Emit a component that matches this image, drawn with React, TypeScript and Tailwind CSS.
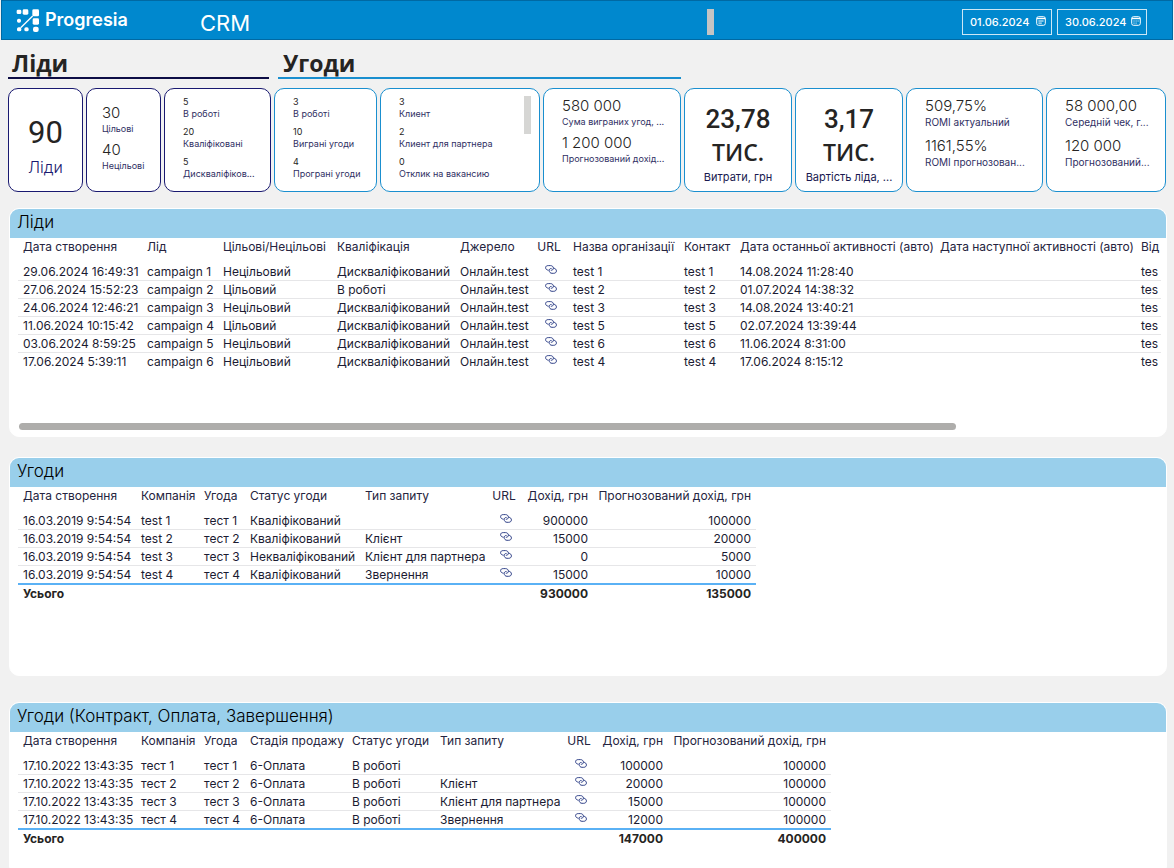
import { ReactNode } from "react";

type Metric = { value: string; label: string };

type Column = {
  title: string;
  width: number;
  align?: "left" | "right" | "center";
};

type DataTableProps = {
  label: string;
  columns: Column[];
  rows: string[][];
  total?: string[];
  fluid?: boolean;
};

// Cells holding this marker are drawn as a link icon
const LINK = "@link";

const leadColumns: Column[] = [
  { title: "Дата створення", width: 124 },
  { title: "Лід", width: 76 },
  { title: "Цільові/Нецільові", width: 114 },
  { title: "Кваліфікація", width: 123 },
  { title: "Джерело", width: 80 },
  { title: "URL", width: 33, align: "center" },
  { title: "Назва організації", width: 111 },
  { title: "Контакт", width: 56 },
  { title: "Дата останньої активності (авто)", width: 200 },
  { title: "Дата наступної активності (авто)", width: 201 },
  { title: "Від", width: 26 }
];

const leadRows = [
  ["29.06.2024 16:49:31", "campaign 1", "Нецільовий", "Дискваліфікований", "Онлайн.test", LINK, "test 1", "test 1", "14.08.2024 11:28:40", "", "tes"],
  ["27.06.2024 15:52:23", "campaign 2", "Цільовий", "В роботі", "Онлайн.test", LINK, "test 2", "test 2", "01.07.2024 14:38:32", "", "tes"],
  ["24.06.2024 12:46:21", "campaign 3", "Нецільовий", "Дискваліфікований", "Онлайн.test", LINK, "test 3", "test 3", "14.08.2024 13:40:21", "", "tes"],
  ["11.06.2024 10:15:42", "campaign 4", "Цільовий", "Дискваліфікований", "Онлайн.test", LINK, "test 5", "test 5", "02.07.2024 13:39:44", "", "tes"],
  ["03.06.2024 8:59:25", "campaign 5", "Нецільовий", "Дискваліфікований", "Онлайн.test", LINK, "test 6", "test 6", "11.06.2024 8:31:00", "", "tes"],
  ["17.06.2024 5:39:11", "campaign 6", "Нецільовий", "Дискваліфікований", "Онлайн.test", LINK, "test 4", "test 4", "17.06.2024 8:15:12", "", "tes"]
];

const dealColumns: Column[] = [
  { title: "Дата створення", width: 118 },
  { title: "Компанія", width: 63 },
  { title: "Угода", width: 46 },
  { title: "Статус угоди", width: 115 },
  { title: "Тип запиту", width: 130 },
  { title: "URL", width: 33, align: "center" },
  { title: "Дохід, грн", width: 70, align: "right" },
  { title: "Прогнозований дохід, грн", width: 163, align: "right" }
];

const dealRows = [
  ["16.03.2019 9:54:54", "test 1", "тест 1", "Кваліфікований", "", LINK, "900000", "100000"],
  ["16.03.2019 9:54:54", "test 2", "тест 2", "Кваліфікований", "Клієнт", LINK, "15000", "20000"],
  ["16.03.2019 9:54:54", "test 3", "тест 3", "Некваліфікований", "Клієнт для партнера", LINK, "0", "5000"],
  ["16.03.2019 9:54:54", "test 4", "тест 4", "Кваліфікований", "Звернення", LINK, "15000", "10000"]
];

const stageColumns: Column[] = [
  { title: "Дата створення", width: 118 },
  { title: "Компанія", width: 63 },
  { title: "Угода", width: 46 },
  { title: "Стадія продажу", width: 102 },
  { title: "Статус угоди", width: 88 },
  { title: "Тип запиту", width: 130 },
  { title: "URL", width: 33, align: "center" },
  { title: "Дохід, грн", width: 70, align: "right" },
  { title: "Прогнозований дохід, грн", width: 163, align: "right" }
];

const stageRows = [
  ["17.10.2022 13:43:35", "тест 1", "тест 1", "6-Оплата", "В роботі", "", LINK, "100000", "100000"],
  ["17.10.2022 13:43:35", "тест 2", "тест 2", "6-Оплата", "В роботі", "Клієнт", LINK, "20000", "100000"],
  ["17.10.2022 13:43:35", "тест 3", "тест 3", "6-Оплата", "В роботі", "Клієнт для партнера", LINK, "15000", "100000"],
  ["17.10.2022 13:43:35", "тест 4", "тест 4", "6-Оплата", "В роботі", "Звернення", LINK, "12000", "100000"]
];

const alignClass = {
  left: "pl-[5px] text-left",
  right: "pr-[5px] text-right",
  center: "pr-[5px] text-center"
};

function Logo() {
  return (
    <svg viewBox="0 0 69 69" className="h-[23px] w-[23px]" fill="#fff" aria-hidden="true">
      <rect x="2" y="2" width="14" height="13" rx="4" />
      <rect x="20" y="1" width="17" height="16" rx="4" />
      <rect x="49" y="1" width="20" height="21" rx="4" />
      <rect x="3" y="29" width="12" height="12" rx="5" />
      <rect x="50" y="28" width="19" height="19" rx="4" />
      <rect x="3" y="55" width="13" height="12" rx="5" />
      <rect x="25" y="55" width="13" height="12" rx="5" />
      <rect x="51" y="53" width="17" height="16" rx="6" />
      <path d="M14 56 50 21" stroke="#fff" strokeWidth="4" />
    </svg>
  );
}

function LinkIcon() {
  return (
    <svg
      viewBox="0 0 12 9"
      className="h-[9px] w-[12px]"
      fill="none"
      stroke="#1c2f7d"
      strokeWidth="0.9"
      strokeLinecap="round"
      aria-hidden="true"
    >
      <path d="M3.2 5.2C1.600 5 .6 4 .6 2.700.6 1.200 1.700.6 3.300.6h2.200c1.600 0 2.900 1 2.900 2.600 0 1.300-1 2.200-2.200 2.100" />
      <path d="M9 3.200c1.500.3 2.400 1.400 2.400 2.700 0 1.500-1.100 2.400-2.700 2.400H7c-1.600 0-2.800-1.200-2.800-2.700 0-1.300.8-2.300 2-2.200" />
    </svg>
  );
}

function CalendarIcon({ dots }: { dots?: boolean }) {
  return (
    <svg viewBox="0 0 10 10" className="mt-[6px] h-[10px] w-[10px] shrink-0" fill="none" stroke="#fff" strokeWidth="1" aria-hidden="true">
      <rect x="0.700" y="0.700" width="8.600" height="8.600" rx="1.800" />
      <path d="M0.700 2.500h8.600" strokeWidth="1.400" />
      {dots ? (
        <path d="M2.500 5h1M4.600 5h1M6.600 5h1M2.500 7.100h1M4.600 7.100h1" />
      ) : (
        <path d="M2.400 5h5.200M2.400 7.100h3.400" />
      )}
    </svg>
  );
}

function DateField({ label, value, dots }: { label: string; value: string; dots?: boolean }) {
  return (
    <label className="flex h-[26px] items-start gap-[4px] border border-white/80 px-[5px]">
      <input
        type="text"
        aria-label={label}
        defaultValue={value}
        className="h-[24px] w-[64px] bg-transparent pl-[2px] text-[11px] font-medium text-white outline-none"
      />
      <CalendarIcon dots={dots} />
    </label>
  );
}

function Card({ dark, className = "", children }: { dark?: boolean; className?: string; children: ReactNode }) {
  return (
    <div
      className={`flex min-w-0 flex-col rounded-[10px] border bg-white ${dark ? "border-[#191970]" : "border-[#1a8fcf]"} ${className}`}
    >
      {children}
    </div>
  );
}

function SmallMetrics({ items }: { items: Metric[] }) {
  return (
    <dl className="flex min-w-0 flex-1 flex-col gap-[6px] pt-[7px]">
      {items.map((item) => (
        <div key={item.label} className="flex flex-col-reverse">
          <dt className="text-[9px] leading-[12px] whitespace-nowrap text-[#2f2f63]">{item.label}</dt>
          <dd className="text-[9px] leading-[12px] text-[#252423]">{item.value}</dd>
        </div>
      ))}
    </dl>
  );
}

function MediumMetrics({ items, wide }: { items: Metric[]; wide?: boolean }) {
  return (
    <dl className={`flex flex-col ${wide ? "gap-[7px]" : "gap-[4px]"}`}>
      {items.map((item) => (
        <div key={item.label} className="flex flex-col-reverse">
          <dt className={`leading-[16px] whitespace-nowrap text-[#2f2f63] ${wide ? "text-[10px]" : "text-[9px]"}`}>{item.label}</dt>
          <dd className="text-[15px] leading-[17px] font-light text-[#252423]">{item.value}</dd>
        </div>
      ))}
    </dl>
  );
}

function BigMetric({ value, label }: Metric) {
  return (
    <>
      <p className="pt-[13px] text-center font-[Roboto] text-[26px] leading-[34px] font-medium text-[#252423]">{value}</p>
      <p className="text-center font-['Open_Sans'] text-[23px] leading-[32px] font-semibold text-[#252423]">ТИС.</p>
      <p className="text-center text-[11px] leading-[18px] whitespace-nowrap text-[#191950]">{label}</p>
    </>
  );
}

function DataTable({ label, columns, rows, total, fluid }: DataTableProps) {
  const width = columns.reduce((sum, column) => sum + column.width, 0);

  return (
    <table
      aria-label={label}
      className={`table-fixed border-separate border-spacing-0 text-[12px] leading-[17px] whitespace-nowrap text-[#1b1b32] ${fluid ? "min-w-full" : ""}`}
      style={{ width }}
    >
      <colgroup>
        {columns.map((column) => (
          <col key={column.title} style={{ width: column.width }} />
        ))}
      </colgroup>
      <thead>
        <tr>
          {columns.map((column) => (
            <th
              key={column.title}
              scope="col"
              className={`pb-[8px] font-normal text-[#252440] ${alignClass[column.align ?? "left"]}`}
            >
              {column.title}
            </th>
          ))}
        </tr>
      </thead>
      <tbody>
        {rows.map((row, rowIndex) => {
          const last = rowIndex === rows.length - 1;
          const border = last ? (total ? "border-b-2 border-[#5ab1f5]" : "") : "border-b border-[#e6e6e8]";
          return (
            <tr key={rowIndex}>
              {row.map((cell, index) => (
                <td key={index} className={`${border} ${alignClass[columns[index].align ?? "left"]}`}>
                  {cell === LINK ? (
                    <a href="#" aria-label="Відкрити" className="flex h-[17px] items-start justify-center pt-[2px] pl-[4px]">
                      <LinkIcon />
                    </a>
                  ) : (
                    cell
                  )}
                </td>
              ))}
            </tr>
          );
        })}
      </tbody>
      {total && (
        <tfoot>
          <tr>
            {total.map((cell, index) => (
              <td key={index} className={`font-bold text-[#252423] ${alignClass[columns[index].align ?? "left"]}`}>
                {cell}
              </td>
            ))}
          </tr>
        </tfoot>
      )}
    </table>
  );
}

function Panel({ title, className = "", children }: { title: string; className?: string; children: ReactNode }) {
  return (
    <section className={`flex flex-col border border-white bg-white ${className}`}>
      <h2 className="h-[29px] rounded-t-[9px] bg-[#99cfeb] px-[7px] text-[17px] leading-[27px] font-light text-black">{title}</h2>
      <div className="flex flex-1 flex-col pr-[5px] pl-[8px]">{children}</div>
    </section>
  );
}

export default function App() {
  return (
    <div className="flex min-h-screen flex-col bg-[#f1f1f1] font-[Inter,'Noto_Sans',sans-serif]">
      <header className="mx-px flex h-[40px] items-center border border-[#0069a3] bg-[#0088ce] pr-[25px] pl-[14px] text-white">
        <div className="flex w-[184px] items-center gap-[6px]">
          <Logo />
          <span className="text-[18px] leading-[20px] font-semibold">Progresia</span>
        </div>
        <h1 className="pt-[6px] text-[22px] leading-[28px]">CRM</h1>
        <div className="flex flex-1 justify-end pt-[4px] pr-[248px]">
          <span className="h-[26px] w-[7px] bg-[#c4c4c4]" />
        </div>
        <div className="flex gap-[5px] pt-[3px]">
          <DateField label="Дата від" value="01.06.2024" />
          <DateField label="Дата до" value="30.06.2024" dots />
        </div>
      </header>

      <div className="flex gap-[9px] px-[8px] pt-[9px] font-['Open_Sans']">
        <h2 className="w-[261px] border-b-2 border-[#0d0d45] pl-[4px] text-[23px] leading-[28px] font-bold text-[#252423]">Ліди</h2>
        <h2 className="w-[403px] border-b-2 border-[#1a8fcf] pl-[5px] text-[23px] leading-[28px] font-bold text-[#252423]">Угоди</h2>
      </div>

      <div className="mt-[9px] grid h-[104px] grid-cols-[75fr_75fr_107fr_103fr_160fr_138fr_108fr_108fr_137fr_120fr] gap-[3px] px-[8px]">
        <Card dark className="items-center">
          <p className="pt-[24px] font-[Roboto] text-[31px] leading-[40px] text-[#252423]">90</p>
          <p className="pt-[2px] text-[16px] leading-[24px] font-light text-[#191970]">Ліди</p>
        </Card>
        <Card dark className="pt-[15px] pl-[15px]">
          <MediumMetrics
            items={[
              { value: "30", label: "Цільові" },
              { value: "40", label: "Нецільові" }
            ]}
          />
        </Card>
        <Card dark className="pl-[18px]">
          <SmallMetrics
            items={[
              { value: "5", label: "В роботі" },
              { value: "20", label: "Кваліфіковані" },
              { value: "5", label: "Дискваліфіков..." }
            ]}
          />
        </Card>
        <Card className="pl-[18px]">
          <SmallMetrics
            items={[
              { value: "3", label: "В роботі" },
              { value: "10", label: "Виграні угоди" },
              { value: "4", label: "Програні угоди" }
            ]}
          />
        </Card>
        <Card className="pr-[8px] pl-[18px]">
          <div className="flex">
            <SmallMetrics
              items={[
                { value: "3", label: "Клиент" },
                { value: "2", label: "Клиент для партнера" },
                { value: "0", label: "Отклик на вакансию" }
              ]}
            />
            <span className="mt-[7px] h-[38px] w-[7px] bg-[#d6d6d4]" />
          </div>
        </Card>
        <Card className="pt-[8px] pl-[18px]">
          <MediumMetrics
            items={[
              { value: "580 000", label: "Сума виграних угод, ..." },
              { value: "1 200 000", label: "Прогнозований дохід..." }
            ]}
          />
        </Card>
        <Card>
          <BigMetric value="23,78" label="Витрати, грн" />
        </Card>
        <Card>
          <BigMetric value="3,17" label="Вартість ліда, ..." />
        </Card>
        <Card className="pt-[8px] pl-[18px]">
          <MediumMetrics
            wide
            items={[
              { value: "509,75%", label: "ROMI актуальний" },
              { value: "1161,55%", label: "ROMI прогнозован..." }
            ]}
          />
        </Card>
        <Card className="pt-[8px] pl-[18px]">
          <MediumMetrics
            wide
            items={[
              { value: "58 000,00", label: "Середній чек, г..." },
              { value: "120 000", label: "Прогнозований..." }
            ]}
          />
        </Card>
      </div>

      <main className="flex flex-1 flex-col pt-[16px] pr-[7px] pl-[9px]">
        <Panel title="Ліди" className="min-h-[229px] rounded-[10px]">
          <div className="overflow-hidden">
            <DataTable label="Ліди" columns={leadColumns} rows={leadRows} fluid />
          </div>
          <div className="mt-auto mb-[6px]">
            <div className="ml-px h-[7px] w-[82%] rounded-full bg-[#aeadab]" />
          </div>
        </Panel>
        <Panel title="Угоди" className="mt-[20px] min-h-[219px] rounded-[10px]">
          <DataTable
            label="Угоди"
            columns={dealColumns}
            rows={dealRows}
            total={["Усього", "", "", "", "", "", "930000", "135000"]}
          />
        </Panel>
        <Panel title="Угоди (Контракт, Оплата, Завершення)" className="mt-[26px] flex-1 rounded-t-[10px]">
          <DataTable
            label="Угоди (Контракт, Оплата, Завершення)"
            columns={stageColumns}
            rows={stageRows}
            total={["Усього", "", "", "", "", "", "", "147000", "400000"]}
          />
        </Panel>
      </main>
    </div>
  );
}
